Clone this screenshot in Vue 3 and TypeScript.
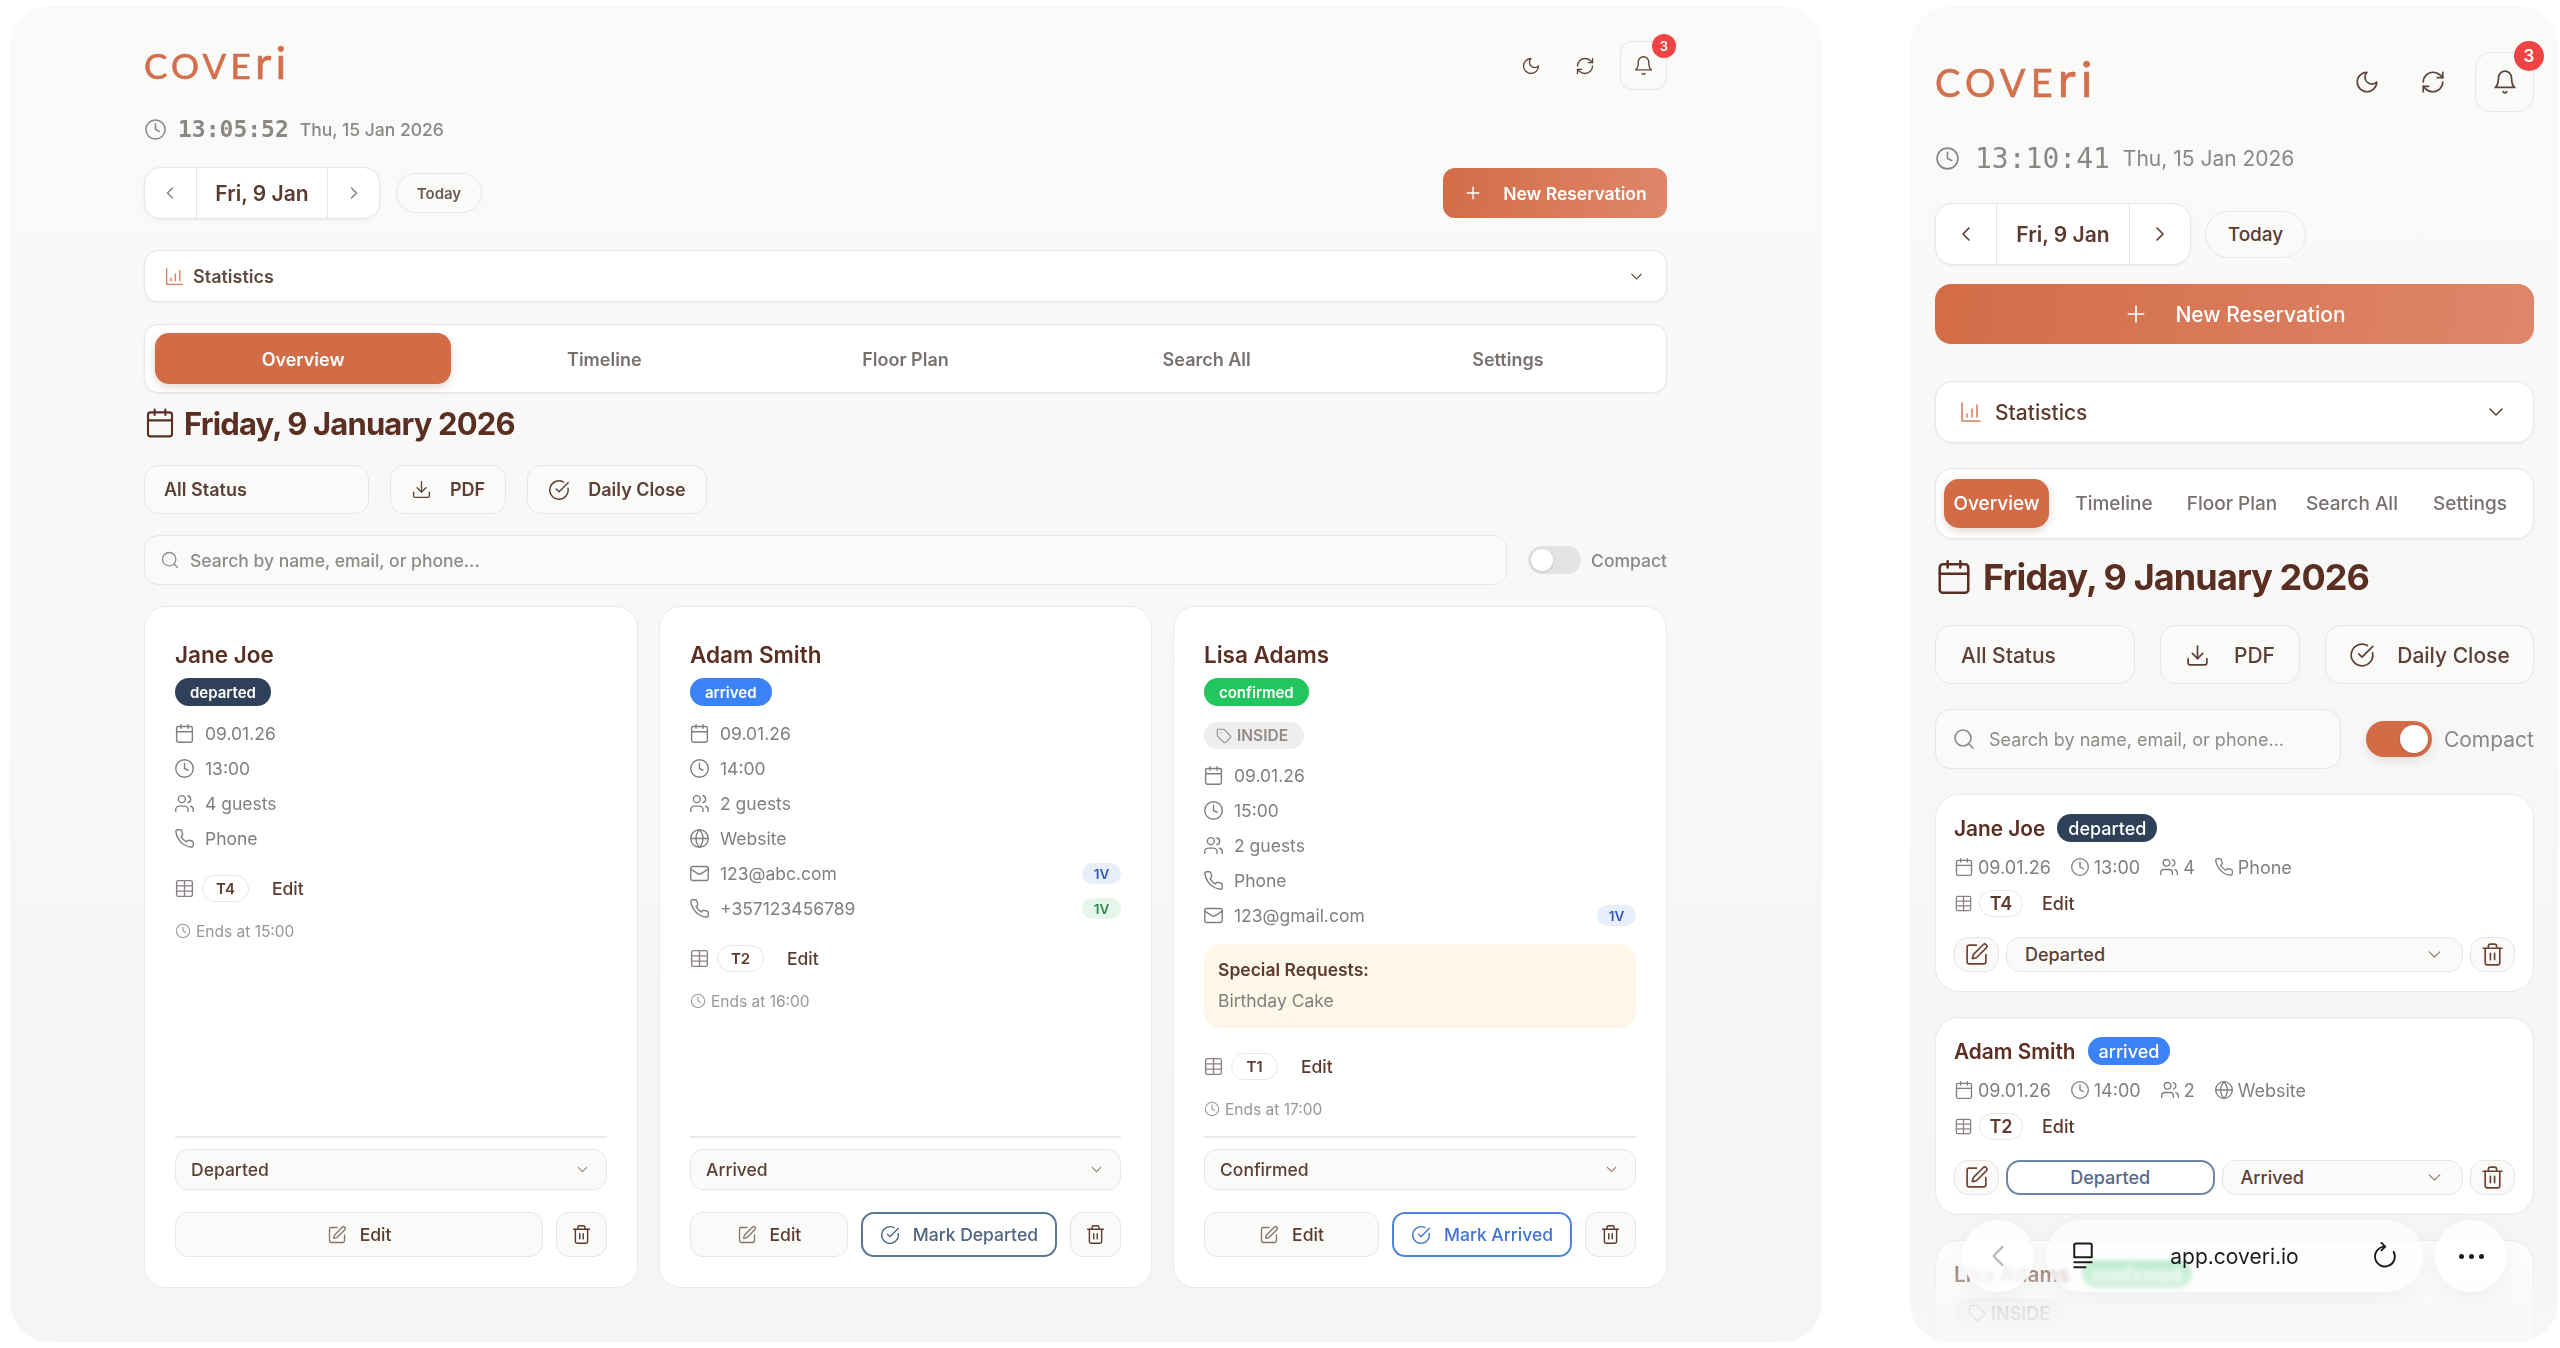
<script setup lang="ts">
import { h } from 'vue'

const icons: Record<string, string[]> = {
  calendar: ['M8 2v4', 'M16 2v4', 'M5 4h14a2 2 0 0 1 2 2v14a2 2 0 0 1-2 2H5a2 2 0 0 1-2-2V6a2 2 0 0 1 2-2z', 'M3 10h18'],
  clock: ['M12 2a10 10 0 1 0 0 20 10 10 0 0 0 0-20', 'M12 6v6l4 2'],
  users: ['M16 21v-2a4 4 0 0 0-4-4H6a4 4 0 0 0-4 4v2', 'M9 3a4 4 0 1 0 0 8 4 4 0 0 0 0-8', 'M22 21v-2a4 4 0 0 0-3-3.87', 'M16 3.13a4 4 0 0 1 0 7.75'],
  phone: ['M22 16.92v3a2 2 0 0 1-2.18 2 19.79 19.79 0 0 1-8.63-3.07 19.5 19.5 0 0 1-6-6 19.79 19.79 0 0 1-3.07-8.67A2 2 0 0 1 4.11 2h3a2 2 0 0 1 2 1.72 12.84 12.84 0 0 0 .7 2.81 2 2 0 0 1-.45 2.11L8.09 9.91a16 16 0 0 0 6 6l1.27-1.27a2 2 0 0 1 2.11-.45 12.84 12.84 0 0 0 2.81.7A2 2 0 0 1 22 16.92z'],
  globe: ['M12 2a10 10 0 1 0 0 20 10 10 0 0 0 0-20', 'M12 2a14.5 14.5 0 0 0 0 20 14.5 14.5 0 0 0 0-20', 'M2 12h20'],
  mail: ['M4 4h16a2 2 0 0 1 2 2v12a2 2 0 0 1-2 2H4a2 2 0 0 1-2-2V6a2 2 0 0 1 2-2z', 'm22 7-8.97 5.7a1.94 1.94 0 0 1-2.06 0L2 7'],
  table: ['M12 3v18', 'M5 3h14a2 2 0 0 1 2 2v14a2 2 0 0 1-2 2H5a2 2 0 0 1-2-2V5a2 2 0 0 1 2-2z', 'M3 9h18', 'M3 15h18'],
  moon: ['M12 3a6 6 0 0 0 9 9 9 9 0 1 1-9-9Z'],
  refresh: ['M3 12a9 9 0 0 1 9-9 9.75 9.75 0 0 1 6.74 2.74L21 8', 'M21 3v5h-5', 'M21 12a9 9 0 0 1-9 9 9.75 9.75 0 0 1-6.74-2.74L3 16', 'M8 16H3v5'],
  bell: ['M6 8a6 6 0 0 1 12 0c0 7 3 9 3 9H3s3-2 3-9', 'M10.3 21a1.94 1.94 0 0 0 3.4 0'],
  left: ['m15 18-6-6 6-6'],
  right: ['m9 18 6-6-6-6'],
  down: ['m6 9 6 6 6-6'],
  plus: ['M5 12h14', 'M12 5v14'],
  chart: ['M3 3v18h18', 'M18 17V5', 'M13 17V9', 'M8 17v-3'],
  download: ['M21 15v4a2 2 0 0 1-2 2H5a2 2 0 0 1-2-2v-4', 'm7 10 5 5 5-5', 'M12 15V3'],
  check: ['M21.801 10A10 10 0 1 1 17 3.335', 'm9 11 3 3L22 4'],
  search: ['M11 3a8 8 0 1 0 0 16 8 8 0 0 0 0-16', 'm21 21-4.3-4.3'],
  edit: ['M12 3H5a2 2 0 0 0-2 2v14a2 2 0 0 0 2 2h14a2 2 0 0 0 2-2v-7', 'M18.375 2.625a1 1 0 0 1 3 3l-9.013 9.014a2 2 0 0 1-.853.505l-2.873.84a.5.5 0 0 1-.62-.62l.84-2.873a2 2 0 0 1 .506-.852z'],
  trash: ['M3 6h18', 'M19 6v14c0 1-1 2-2 2H7c-1 0-2-1-2-2V6', 'M8 6V4c0-1 1-2 2-2h4c1 0 2 1 2 2v2', 'M10 11v6', 'M14 11v6'],
  tag: ['M12.586 2.586A2 2 0 0 0 11.172 2H4a2 2 0 0 0-2 2v7.172a2 2 0 0 0 .586 1.414l8.704 8.704a2.426 2.426 0 0 0 3.42 0l6.58-6.58a2.426 2.426 0 0 0 0-3.42z', 'M7.5 7h.01'],
  reload: ['M12 4a8.5 8.5 0 1 0 7.4 4.4', 'M9 .8 12.2 4 9 7.2'],
  tabs: ['M6.5 2h11A1.5 1.5 0 0 1 19 3.5V13H5V3.5A1.5 1.5 0 0 1 6.5 2z', 'M5 17h14', 'M5 21h9'],
}

const Icon = (props: { name: string; size?: number }) =>
  h(
    'svg',
    {
      width: props.size ?? 21,
      height: props.size ?? 21,
      viewBox: '0 0 24 24',
      fill: 'none',
      stroke: 'currentColor',
      'stroke-width': 1.6,
      'stroke-linecap': 'round',
      'stroke-linejoin': 'round',
    },
    icons[props.name].map((d) => h('path', { d })),
  )
Icon.props = ['name', 'size']

interface Reservation {
  name: string
  status: string
  date: string
  time: string
  guests: number
  source: string
  sourceIcon: string
  tag?: string
  email?: string
  phone?: string
  request?: string
  table: string
  ends: string
  current: string
  next?: string
}

const reservations: Reservation[] = [
  { name: 'Jane Joe', status: 'departed', date: '09.01.26', time: '13:00', guests: 4, source: 'Phone', sourceIcon: 'phone', table: 'T4', ends: '15:00', current: 'Departed' },
  { name: 'Adam Smith', status: 'arrived', date: '09.01.26', time: '14:00', guests: 2, source: 'Website', sourceIcon: 'globe', email: '123@abc.com', phone: '+357123456789', table: 'T2', ends: '16:00', current: 'Arrived', next: 'Departed' },
  { name: 'Lisa Adams', status: 'confirmed', date: '09.01.26', time: '15:00', guests: 2, source: 'Phone', sourceIcon: 'phone', tag: 'INSIDE', email: '123@gmail.com', request: 'Birthday Cake', table: 'T1', ends: '17:00', current: 'Confirmed', next: 'Arrived' },
]

const tabs = ['Overview', 'Timeline', 'Floor Plan', 'Search All', 'Settings']
</script>

<template>
  <div class="page">
    <!-- desktop view -->
    <section class="panel desk">
      <header class="top">
        <div class="logo">COVE<span class="logo-tail">ri</span></div>
        <div class="top-actions">
          <button class="icon-btn"><Icon name="moon" :size="20" /></button>
          <button class="icon-btn"><Icon name="refresh" :size="20" /></button>
          <button class="bell"><Icon name="bell" :size="21" /><span class="bell-count">3</span></button>
        </div>
      </header>

      <div class="clock">
        <Icon name="clock" :size="23" />
        <span class="clock-time">13:05:52</span>
        <span class="clock-date">Thu, 15 Jan 2026</span>
      </div>

      <div class="toolbar">
        <div class="date-nav">
          <button class="date-arrow"><Icon name="left" :size="20" /></button>
          <span class="date-label">Fri, 9 Jan</span>
          <button class="date-arrow"><Icon name="right" :size="20" /></button>
        </div>
        <button class="today">Today</button>
        <button class="new-res"><Icon name="plus" :size="20" /><span>New Reservation</span></button>
      </div>

      <div class="stats">
        <Icon name="chart" :size="21" class="stats-icon" />
        <span>Statistics</span>
        <Icon name="down" :size="19" class="stats-chevron" />
      </div>

      <nav class="tab-bar">
        <div v-for="(tab, i) in tabs" :key="tab" class="tab" :class="{ active: i === 0 }">{{ tab }}</div>
      </nav>

      <h1 class="title"><Icon name="calendar" :size="32" /><span>Friday, 9 January 2026</span></h1>

      <div class="filters">
        <div class="filter filter-status">All Status</div>
        <button class="filter filter-pdf"><Icon name="download" :size="21" /><span>PDF</span></button>
        <button class="filter filter-close"><Icon name="check" :size="22" /><span>Daily Close</span></button>
      </div>

      <div class="search-row">
        <div class="search"><Icon name="search" :size="20" /><span>Search by name, email, or phone...</span></div>
        <div class="switch"></div>
        <span class="switch-label">Compact</span>
      </div>

      <div class="cards">
        <article v-for="r in reservations" :key="r.name" class="card">
          <h2 class="card-name">{{ r.name }}</h2>
          <div class="badge-line"><span class="badge" :class="r.status">{{ r.status }}</span></div>
          <div v-if="r.tag" class="tag"><Icon name="tag" :size="16" />{{ r.tag }}</div>
          <div class="rows" :class="{ tagged: r.tag }">
            <div class="row"><Icon name="calendar" />{{ r.date }}</div>
            <div class="row"><Icon name="clock" />{{ r.time }}</div>
            <div class="row"><Icon name="users" />{{ r.guests }} guests</div>
            <div class="row"><Icon :name="r.sourceIcon" />{{ r.source }}</div>
            <div v-if="r.email" class="row"><Icon name="mail" />{{ r.email }}<span class="visits blue">1V</span></div>
            <div v-if="r.phone" class="row"><Icon name="phone" />{{ r.phone }}<span class="visits green">1V</span></div>
          </div>
          <div v-if="r.request" class="request">
            <strong>Special Requests:</strong>
            <span>{{ r.request }}</span>
          </div>
          <div class="table-line">
            <Icon name="table" />
            <span class="table-chip">{{ r.table }}</span>
            <span class="table-edit">Edit</span>
          </div>
          <div class="ends"><Icon name="clock" :size="16" />Ends at {{ r.ends }}</div>
          <div class="card-foot">
            <div class="status-select"><span>{{ r.current }}</span><Icon name="down" :size="17" /></div>
            <div class="foot-buttons">
              <button class="foot-btn foot-edit"><Icon name="edit" :size="20" />Edit</button>
              <button v-if="r.next" class="foot-btn foot-mark" :class="r.status">
                <Icon name="check" :size="20" />Mark {{ r.next }}
              </button>
              <button class="foot-btn foot-trash"><Icon name="trash" :size="21" /></button>
            </div>
          </div>
        </article>
      </div>
    </section>

    <!-- phone view -->
    <section class="panel phone">
      <header class="top">
        <div class="logo">COVE<span class="logo-tail">ri</span></div>
        <div class="top-actions">
          <button class="icon-btn"><Icon name="moon" :size="26" /></button>
          <button class="icon-btn"><Icon name="refresh" :size="26" /></button>
          <button class="bell"><Icon name="bell" :size="26" /><span class="bell-count">3</span></button>
        </div>
      </header>

      <div class="clock">
        <Icon name="clock" :size="25" />
        <span class="clock-time">13:10:41</span>
        <span class="clock-date">Thu, 15 Jan 2026</span>
      </div>

      <div class="toolbar">
        <div class="date-nav">
          <button class="date-arrow"><Icon name="left" :size="24" /></button>
          <span class="date-label">Fri, 9 Jan</span>
          <button class="date-arrow"><Icon name="right" :size="24" /></button>
        </div>
        <button class="today">Today</button>
      </div>

      <button class="new-res"><Icon name="plus" :size="26" /><span>New Reservation</span></button>

      <div class="stats">
        <Icon name="chart" :size="24" class="stats-icon" />
        <span>Statistics</span>
        <Icon name="down" :size="24" class="stats-chevron" />
      </div>

      <nav class="tab-bar">
        <div v-for="(tab, i) in tabs" :key="tab" class="tab" :class="{ active: i === 0 }">{{ tab }}</div>
      </nav>

      <h1 class="title"><Icon name="calendar" :size="38" /><span>Friday, 9 January 2026</span></h1>

      <div class="filters">
        <div class="filter filter-status">All Status</div>
        <button class="filter filter-pdf"><Icon name="download" :size="25" /><span>PDF</span></button>
        <button class="filter filter-close"><Icon name="check" :size="26" /><span>Daily Close</span></button>
      </div>

      <div class="search-row">
        <div class="search"><Icon name="search" :size="24" /><span>Search by name, email, or phone...</span></div>
        <div class="switch on"></div>
        <span class="switch-label">Compact</span>
      </div>

      <article v-for="r in reservations" :key="r.name" class="mini-card">
        <div class="mini-head">
          <h2 class="card-name">{{ r.name }}</h2>
          <span class="badge" :class="r.status">{{ r.status }}</span>
        </div>
        <div v-if="r.tag" class="tag"><Icon name="tag" :size="18" />{{ r.tag }}</div>
        <div class="mini-meta">
          <span class="meta"><Icon name="calendar" :size="20" />{{ r.date }}</span>
          <span class="meta"><Icon name="clock" :size="20" />{{ r.time }}</span>
          <span class="meta"><Icon name="users" :size="20" />{{ r.guests }}</span>
          <span class="meta"><Icon :name="r.sourceIcon" :size="20" />{{ r.source }}</span>
        </div>
        <div class="table-line">
          <Icon name="table" :size="19" />
          <span class="table-chip">{{ r.table }}</span>
          <span class="table-edit">Edit</span>
        </div>
        <div class="mini-actions">
          <button class="mini-square"><Icon name="edit" :size="25" /></button>
          <button v-if="r.next" class="mini-mark" :class="r.status">{{ r.next }}</button>
          <div class="status-select"><span>{{ r.current }}</span><Icon name="down" :size="21" /></div>
          <button class="mini-square"><Icon name="trash" :size="25" /></button>
        </div>
      </article>

      <div class="fade"></div>
      <div class="browser-bar">
        <button class="bar-round bar-back"><Icon name="left" :size="36" /></button>
        <div class="bar-url">
          <Icon name="tabs" :size="30" />
          <span>app.coveri.io</span>
          <Icon name="reload" :size="28" />
        </div>
        <button class="bar-round bar-more"><i></i><i></i><i></i></button>
      </div>
    </section>
  </div>
</template>

<style>
html,
body {
  margin: 0;
  background: #fff;
  overflow: hidden;
}
</style>

<style scoped>
* {
  box-sizing: border-box;
}

button {
  font: inherit;
  color: inherit;
  background: none;
  border: 0;
  padding: 0;
}

h1,
h2 {
  margin: 0;
}

.page {
  display: flex;
  gap: 88px;
  height: 1348px;
  padding: 6px 2px 6px 10px;
  background: #fff;
  color: #5c3a2e;
  font-family: Inter, "Noto Sans", sans-serif;
}

.panel {
  height: 1336px;
  border-radius: 40px;
  background: linear-gradient(180deg, #fafaf9, #f6f5f5);
  overflow: hidden;
}

.top,
.top-actions,
.clock,
.toolbar,
.date-nav,
.stats,
.title,
.filters,
.filter,
.search-row,
.search,
.row,
.table-line,
.ends,
.status-select,
.foot-buttons,
.foot-btn,
.tag,
.mini-head,
.mini-meta,
.meta,
.mini-actions {
  display: flex;
  align-items: center;
}

.top {
  justify-content: space-between;
}

.logo {
  font-family: Lato, sans-serif;
  line-height: 1;
  color: #d26f4c;
  -webkit-text-stroke: 0.6px #d26f4c;
}

.icon-btn,
.bell,
.date-arrow,
.foot-btn,
.mini-square {
  display: flex;
  align-items: center;
  justify-content: center;
}

.icon-btn {
  color: #5c463e;
}

.bell {
  position: relative;
  border: 1.5px solid #e8e5e3;
  color: #5c463e;
}

.bell-count {
  position: absolute;
  display: flex;
  align-items: center;
  justify-content: center;
  border-radius: 50%;
  background: #ef4444;
  color: #fff;
  font-weight: 600;
}

.clock {
  color: #8b8785;
}

.clock-time {
  font-family: "DejaVu Sans Mono", monospace;
}

.date-nav {
  background: #fff;
  border: 1.5px solid #e8e5e3;
  box-shadow: 0 1px 3px rgba(60, 40, 30, 0.06);
  color: #5c3a2e;
}

.date-arrow {
  height: 100%;
}

.date-label {
  display: flex;
  align-items: center;
  justify-content: center;
  height: 100%;
  border-left: 1.5px solid #e8e5e3;
  border-right: 1.5px solid #e8e5e3;
  font-weight: 600;
}

.today {
  border: 1.5px solid #e8e5e3;
  border-radius: 999px;
  background: #fafaf9;
  font-weight: 500;
}

.new-res {
  display: flex;
  align-items: center;
  justify-content: center;
  background: linear-gradient(100deg, #d26c47, #df876a);
  color: #fff;
  font-weight: 500;
}

.stats {
  background: #fff;
  border: 1.5px solid #e8e5e3;
  box-shadow: 0 1px 3px rgba(60, 40, 30, 0.06);
}

.stats-icon {
  color: #d9805f;
}

.stats-chevron {
  margin-left: auto;
  color: #5c463e;
}

.tab-bar {
  display: grid;
  background: #fff;
  border: 1.5px solid #e8e5e3;
  box-shadow: 0 1px 3px rgba(60, 40, 30, 0.06);
}

.tab {
  display: flex;
  align-items: center;
  justify-content: center;
  color: #78716e;
  font-weight: 500;
}

.tab.active {
  background: #d26c47;
  color: #fff;
  box-shadow: 0 3px 8px rgba(120, 70, 50, 0.22);
}

.title {
  color: #5a2f22;
  font-weight: 700;
}

.filter {
  background: #fafaf9;
  border: 1.5px solid #e8e5e3;
  color: #5c4036;
  font-weight: 500;
}

.filter-pdf,
.filter-close {
  justify-content: center;
}

.search {
  flex: 1;
  background: #fafaf9;
  border: 1.5px solid #e8e5e3;
  color: #8f8b89;
}

.switch {
  position: relative;
  flex: none;
  border-radius: 999px;
  background: #e5e3e1;
}

.switch::after {
  content: "";
  position: absolute;
  border-radius: 50%;
  background: #fff;
  box-shadow: 0 1px 3px rgba(0, 0, 0, 0.15);
}

.switch.on {
  background: #d26c47;
  box-shadow: 0 4px 10px rgba(90, 60, 50, 0.12);
}

.switch-label {
  color: #8b8785;
}

.card-name {
  color: #5a2f22;
  font-weight: 600;
}

.badge {
  display: inline-flex;
  align-items: center;
  height: 28px;
  border-radius: 999px;
  color: #fff;
  font-weight: 500;
}

.badge.departed {
  background: #2f4158;
}

.badge.arrived {
  background: #3b82f6;
}

.badge.confirmed {
  background: #22c55e;
}

.tag {
  width: max-content;
  border-radius: 999px;
  background: #efeeec;
  color: #8f8b89;
  font-weight: 600;
}

.table-line {
  color: #8b8280;
}

.table-chip {
  display: flex;
  align-items: center;
  justify-content: center;
  height: 27px;
  border: 1.5px solid #e8e5e3;
  border-radius: 999px;
  background: #fff;
  color: #5c3a2e;
  font-weight: 600;
}

.table-edit {
  color: #5c3a2e;
  font-weight: 500;
}

.status-select {
  justify-content: space-between;
  background: #fafaf9;
  border: 1.5px solid #e8e5e3;
  color: #5c4036;
  font-weight: 500;
}

.status-select svg {
  color: #96807a;
}

/* desktop sizes */
.desk {
  flex: none;
  width: 1812px;
  padding: 35px 155px 0 134px;
  filter: blur(0.6px);
}

.desk .top {
  height: 49px;
}

.desk .logo {
  font-size: 35px;
  letter-spacing: 0.12em;
}

.desk .logo-tail {
  font-size: 45px;
  line-height: 0;
}

.desk .top-actions {
  gap: 18px;
}

.desk .icon-btn {
  width: 36px;
  height: 36px;
}

.desk .bell {
  width: 47px;
  height: 49px;
  border-radius: 12px;
  margin-left: -1px;
}

.desk .bell-count {
  top: -8px;
  right: -10px;
  width: 24px;
  height: 24px;
  font-size: 13px;
}

.desk .clock {
  height: 28px;
  margin-top: 25px;
  gap: 11px;
}

.desk .clock-time {
  font-size: 23px;
  font-weight: 700;
}

.desk .clock-date {
  font-size: 17.5px;
  font-weight: 500;
}

.desk .toolbar {
  height: 52px;
  margin-top: 24px;
  gap: 16px;
}

.desk .date-nav {
  width: 236px;
  height: 52px;
  border-radius: 16px;
  font-size: 21px;
}

.desk .date-arrow {
  width: 51px;
  color: #8b7d78;
}

.desk .date-label {
  width: 134px;
}

.desk .today {
  width: 86px;
  height: 40px;
  font-size: 15px;
  font-weight: 600;
  color: #6b5a53;
}

.desk .new-res {
  width: 224px;
  height: 50px;
  margin-left: auto;
  gap: 20px;
  border-radius: 12px;
  font-size: 17.5px;
  font-weight: 600;
}

.desk .stats {
  height: 52px;
  margin-top: 31px;
  padding: 1px 20px 0 19px;
  gap: 8px;
  border-radius: 14px;
  font-size: 18px;
  font-weight: 600;
  color: #5f4a42;
}

.desk .tab-bar {
  height: 69px;
  margin-top: 22px;
  padding: 8px 10px;
  grid-template-columns: repeat(5, 1fr);
  gap: 5px;
  border-radius: 14px;
}

.desk .tab {
  padding-top: 1px;
  border-radius: 14px;
  font-size: 18px;
  font-weight: 600;
}

.desk .title {
  height: 40px;
  margin-top: 10px;
  gap: 8px;
  font-size: 31px;
  letter-spacing: -0.85px;
}

.desk .filters {
  margin-top: 22px;
  gap: 21px;
}

.desk .filter {
  height: 49px;
  border-radius: 14px;
  font-size: 18px;
  font-weight: 600;
}

.desk .filter-status {
  width: 225px;
  padding-left: 19px;
}

.desk .filter-pdf {
  width: 116px;
  gap: 18px;
}

.desk .filter-close {
  width: 180px;
  gap: 18px;
}

.desk .search-row {
  margin-top: 21px;
  gap: 0;
}

.desk .search {
  height: 50px;
  padding-left: 15px;
  gap: 10px;
  border-radius: 14px;
  font-size: 17.5px;
  font-weight: 500;
}

.desk .switch {
  width: 53px;
  height: 28px;
  margin-left: 21px;
}

.desk .switch::after {
  top: 3px;
  left: 3px;
  width: 22px;
  height: 22px;
}

.desk .switch-label {
  margin-left: 10px;
  font-size: 17.5px;
  font-weight: 500;
}

.cards {
  display: grid;
  grid-template-columns: 494px 493px 494px;
  gap: 21px;
  margin-top: 21px;
  height: 682px;
}

.card {
  display: flex;
  flex-direction: column;
  padding: 34px 30px 30px;
  background: #fff;
  border: 1.5px solid #ebe8e7;
  border-radius: 22px;
}

.card .card-name {
  font-size: 22.5px;
  line-height: 28px;
}

.badge-line {
  margin-top: 9px;
  display: flex;
}

.card .badge {
  padding: 0 15px;
  font-size: 15px;
  font-weight: 600;
}

.card .tag {
  height: 27px;
  margin-top: 16px;
  padding: 0 16px 0 12px;
  gap: 5px;
  font-size: 15.5px;
}

.rows {
  margin-top: 10px;
}

.rows.tagged {
  margin-top: 9px;
}

.row {
  height: 35px;
  gap: 10px;
  color: #827e7c;
  font-size: 17.5px;
}

.row svg {
  margin-left: -1px;
}

.visits {
  margin-left: auto;
  display: flex;
  align-items: center;
  justify-content: center;
  width: 39px;
  height: 21px;
  border-radius: 999px;
  font-size: 13.5px;
  font-weight: 600;
}

.visits.blue {
  background: #e8effb;
  color: #3358b8;
}

.visits.green {
  background: #e6f6ea;
  color: #2b8a4c;
}

.request {
  display: flex;
  flex-direction: column;
  gap: 11px;
  height: 84px;
  margin-top: 11px;
  margin-bottom: 6px;
  padding: 16px 14px;
  border-radius: 16px;
  background: #fdf7e9;
  color: #827e7c;
  font-size: 17.5px;
  line-height: 20px;
}

.request strong {
  color: #5c3a2e;
  font-weight: 600;
}

.card .table-line {
  margin-top: 19px;
  gap: 7px;
  font-size: 17.5px;
}

.card .table-line svg {
  margin-left: -1px;
}

.card .table-chip {
  width: 47px;
  font-size: 15px;
}

.card .table-edit {
  margin-left: 16px;
  font-size: 17.5px;
}

.ends {
  height: 18px;
  margin-top: 20px;
  gap: 5px;
  color: #9a9694;
  font-size: 15.5px;
}

.card-foot {
  margin-top: auto;
  padding-top: 11px;
  border-top: 2px solid #eceae8;
}

.card .status-select {
  height: 41px;
  padding: 0 15px;
  border-radius: 13px;
  font-size: 17.5px;
}

.foot-buttons {
  margin-top: 22px;
  gap: 13px;
}

.foot-btn {
  height: 45px;
  gap: 13px;
  border: 1.5px solid #e8e5e3;
  border-radius: 13px;
  background: #fafaf9;
  font-size: 17.5px;
  font-weight: 500;
}

.foot-edit {
  flex: 1;
}

.foot-edit svg {
  color: #857570;
}

.foot-mark {
  flex: none;
  padding: 0 17px;
  background: #fff;
}

.foot-mark.arrived {
  border: 2px solid #5b7692;
  color: #4d6480;
}

.foot-mark.confirmed {
  border: 2px solid #4a84e0;
  color: #3f73d8;
}

.foot-trash {
  flex: none;
  width: 51px;
}

/* phone sizes */
.phone {
  position: relative;
  flex: none;
  width: 648px;
  padding: 46px 24px 0 25px;
  filter: blur(0.3px);
}

.phone .top {
  height: 60px;
}

.phone .logo {
  font-size: 38px;
  letter-spacing: 0.135em;
}

.phone .logo-tail {
  font-size: 49px;
  line-height: 0;
}

.phone .top-actions {
  gap: 18px;
}

.phone .icon-btn {
  width: 48px;
  height: 48px;
}

.phone .bell {
  width: 59px;
  height: 60px;
  border-radius: 16px;
}

.phone .bell-count {
  top: -12px;
  right: -11px;
  width: 30px;
  height: 30px;
  font-size: 17px;
}

.phone .clock {
  height: 32px;
  margin-top: 30px;
  gap: 15px;
}

.phone .clock-time {
  font-size: 28px;
}

.phone .clock-date {
  font-size: 21px;
  margin-left: -2px;
}

.phone .toolbar {
  margin-top: 29px;
  gap: 14px;
}

.phone .date-nav {
  width: 256px;
  height: 62px;
  border-radius: 18px;
  font-size: 21px;
}

.phone .date-arrow {
  width: 60px;
}

.phone .date-label {
  width: 134px;
}

.phone .today {
  width: 101px;
  height: 47px;
  font-size: 19px;
}

.phone .new-res {
  width: 100%;
  height: 60px;
  margin-top: 19px;
  gap: 26px;
  border-radius: 16px;
  font-size: 21px;
}

.phone .stats {
  height: 62px;
  margin-top: 37px;
  padding: 0 25px 0 23px;
  gap: 12px;
  border-radius: 18px;
  font-size: 21px;
  font-weight: 500;
}

.phone .tab-bar {
  height: 71px;
  margin-top: 25px;
  padding: 10px 8px;
  grid-template-columns: 105px 130px 106px 134px 102px;
  border-radius: 18px;
}

.phone .tab {
  border-radius: 15px;
  font-size: 19px;
}

.phone .title {
  height: 44px;
  margin-top: 16px;
  gap: 10px;
  font-size: 36px;
  letter-spacing: -0.9px;
}

.phone .filters {
  margin-top: 26px;
  justify-content: space-between;
}

.phone .filter {
  height: 59px;
  padding-top: 1px;
  border-radius: 16px;
  font-size: 21px;
}

.phone .filter-status {
  width: 200px;
  padding-left: 25px;
}

.phone .filter-pdf {
  width: 140px;
  gap: 24px;
}

.phone .filter-close {
  width: 209px;
  gap: 22px;
}

.phone .search-row {
  margin-top: 25px;
}

.phone .search {
  height: 60px;
  padding-left: 16px;
  gap: 13px;
  border-radius: 16px;
  font-size: 18px;
}

.phone .switch {
  width: 66px;
  height: 36px;
  margin-left: 25px;
}

.phone .switch::after {
  top: 4px;
  right: 4px;
  width: 28px;
  height: 28px;
}

.phone .switch-label {
  margin-left: 12px;
  font-size: 21px;
}

.mini-card {
  height: 198px;
  margin-top: 25px;
  padding: 19px 18px 19px;
  background: #fff;
  border: 1.5px solid #ebe8e7;
  border-radius: 24px;
}

.mini-head {
  gap: 12px;
  height: 28px;
}

.mini-card .card-name {
  font-size: 20.8px;
}

.mini-card .badge {
  padding: 0 11px;
  font-size: 18px;
}

.mini-card .tag {
  height: 30px;
  margin-top: 10px;
  padding: 0 14px;
  gap: 5px;
  font-size: 18px;
}

.mini-meta {
  height: 24px;
  margin-top: 13px;
  gap: 19px;
  color: #827e7c;
  font-size: 18px;
}

.meta {
  gap: 4px;
}

.mini-card .table-line {
  margin-top: 11px;
  gap: 6px;
}

.mini-card .table-chip {
  width: 44px;
  font-size: 18px;
}

.mini-card .table-edit {
  margin-left: 13px;
  font-size: 18px;
}

.mini-actions {
  margin-top: 20px;
  gap: 7px;
}

.mini-square {
  flex: none;
  width: 45px;
  height: 35px;
  border: 1.5px solid #e8e5e3;
  border-radius: 14px;
  background: #fafaf9;
  color: #6e4132;
}

.mini-mark {
  flex: 1 1 0;
  height: 35px;
  border: 2px solid #6f86a3;
  border-radius: 14px;
  background: #fff;
  color: #55698a;
  font-size: 18px;
  font-weight: 500;
}

.mini-actions .status-select {
  flex: 1 1 0;
  height: 35px;
  padding: 0 17px 0 18px;
  border-radius: 14px;
  font-size: 18px;
}

.fade {
  position: absolute;
  left: 0;
  right: 0;
  bottom: 0;
  height: 128px;
  background: linear-gradient(180deg, rgba(247, 247, 246, 0), rgba(247, 247, 246, 0.4) 38%, rgba(247, 247, 246, 0.82) 78%);
}

.browser-bar {
  position: absolute;
  left: 52px;
  bottom: 50px;
  display: flex;
  gap: 12px;
}

.bar-round,
.bar-url {
  height: 72px;
  border-radius: 999px;
  background: rgba(255, 255, 255, 0.82);
  backdrop-filter: blur(2px);
  box-shadow: 0 6px 24px rgba(0, 0, 0, 0.05);
}

.bar-url {
  background: rgba(255, 255, 255, 0.55);
}

.bar-round {
  display: flex;
  align-items: center;
  justify-content: center;
  gap: 5px;
  width: 72px;
}

.bar-back {
  color: #b9b9b9;
}

.bar-more i {
  width: 5px;
  height: 5px;
  border-radius: 50%;
  background: #1c1c1e;
}

.bar-url {
  display: flex;
  align-items: center;
  justify-content: space-between;
  width: 377px;
  padding: 0 24px 0 22px;
  color: #1c1c1e;
  font-size: 21px;
}
</style>
